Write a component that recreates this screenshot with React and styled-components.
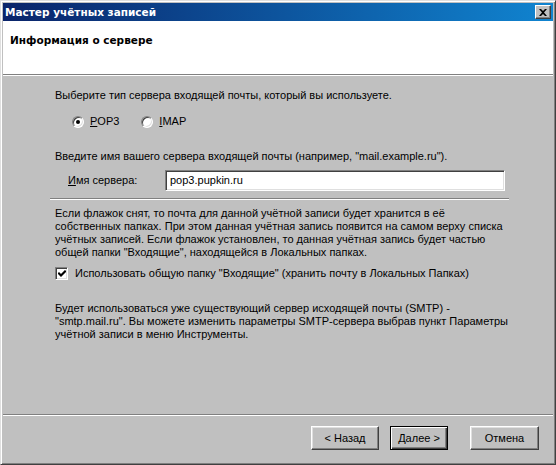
import React from "react";
import styled, { createGlobalStyle } from "styled-components";

const GlobalStyle = createGlobalStyle`
  html, body {
    margin: 0;
    padding: 0;
    background: #c0c0c0;
    overflow: hidden;
  }
`;

const Window = styled.div`
  width: 556px;
  height: 465px;
  box-sizing: border-box;
  background: #c0c0c0;
  border: 1px solid;
  border-color: #dfdfdf #404040 #404040 #dfdfdf;
  box-shadow: inset 1px 1px #ffffff, inset -1px -1px #808080;
  padding: 2px;
  display: flex;
  flex-direction: column;
  font-family: "Liberation Sans", Arial, sans-serif;
  font-size: 11px;
  color: #000;
`;

const TitleBar = styled.div`
  height: 18px;
  flex: none;
  display: flex;
  align-items: center;
  justify-content: space-between;
  padding: 0 2px 0 2px;
  background: linear-gradient(to right, #0a246a, #1084d0);
  color: #fff;
  font-family: "DejaVu Sans", Tahoma, sans-serif;
  font-weight: bold;
  font-size: 10.5px;
`;

const CloseButton = styled.div`
  width: 16px;
  height: 14px;
  box-sizing: border-box;
  background: #c0c0c0;
  border: 1px solid;
  border-color: #ffffff #404040 #404040 #ffffff;
  box-shadow: inset -1px -1px #808080;
  display: flex;
  align-items: center;
  justify-content: center;
`;

const Header = styled.div`
  flex: none;
  height: 54px;
  box-sizing: border-box;
  background: #fff;
  border-bottom: 1px solid #808080;
  box-shadow: 0 1px #ffffff;
  padding: 13px 0 0 7px;
  font-family: "DejaVu Sans", Tahoma, sans-serif;
  font-weight: bold;
  font-size: 10.5px;
  line-height: 13px;
`;

const Body = styled.div`
  flex: 1;
  padding: 14px 0 0 49px;
  line-height: 13px;
  white-space: nowrap;
`;

const Text = styled.div`
  margin-top: ${(p) => p.$gap || 0}px;
  margin-left: 3px;
`;

const RadioRow = styled.div`
  display: flex;
  align-items: center;
  height: 13px;
  margin-top: 13px;
  padding-left: 20px;
`;

const RadioLabel = styled.label`
  display: flex;
  align-items: center;
  gap: 6px;
  margin-right: 22px;
`;

const Radio = styled.span`
  position: relative;
  width: 12px;
  height: 12px;
  box-sizing: border-box;
  border-radius: 50%;
  background: #fff;
  border: 1px solid;
  border-color: #808080 #ffffff #ffffff #808080;
  box-shadow: inset 1px 1px #404040, inset -1px -1px #dfdfdf;
  &::after {
    content: "";
    display: ${(p) => (p.$checked ? "block" : "none")};
    position: absolute;
    left: 3px;
    top: 3px;
    width: 4px;
    height: 4px;
    border-radius: 50%;
    background: #000;
  }
`;

const FieldRow = styled.div`
  display: flex;
  align-items: center;
  margin-top: 7px;
  padding-left: 16px;
`;

const FieldLabel = styled.span`
  width: 97px;
`;

const Input = styled.div`
  width: 340px;
  height: 21px;
  box-sizing: border-box;
  background: #fff;
  border: 1px solid;
  border-color: #808080 #ffffff #ffffff #808080;
  box-shadow: inset 1px 1px #404040, inset -1px -1px #dfdfdf;
  padding: 3px 0 0 4px;
`;

const Separator = styled.div`
  height: 1px;
  background: #808080;
  box-shadow: 0 1px #ffffff;
  margin: ${(p) => p.$margin};
`;

const CheckRow = styled.label`
  display: flex;
  align-items: center;
  gap: 7px;
  margin-top: 8px;
  padding-left: 3px;
`;

const CheckBox = styled.span`
  width: 13px;
  height: 13px;
  box-sizing: border-box;
  background: #fff;
  border: 1px solid;
  border-color: #808080 #ffffff #ffffff #808080;
  box-shadow: inset 1px 1px #404040, inset -1px -1px #dfdfdf;
  display: flex;
  align-items: center;
  justify-content: center;
`;

const Footer = styled.div`
  flex: none;
  display: flex;
  flex-direction: column;
`;

const ButtonBar = styled.div`
  display: flex;
  justify-content: flex-end;
  padding: 11px 14px 12px 0;
`;

const Button = styled.div`
  width: ${(p) => p.$width}px;
  height: 24px;
  box-sizing: border-box;
  margin-left: ${(p) => p.$gap}px;
  background: #c0c0c0;
  display: flex;
  align-items: center;
  justify-content: center;
  border: 1px solid;
  border-color: ${(p) =>
    p.$default ? "#000" : "#ffffff #404040 #404040 #ffffff"};
  box-shadow: ${(p) =>
    p.$default
      ? "inset 1px 1px #ffffff, inset -1px -1px #404040, inset -2px -2px #808080"
      : "inset -1px -1px #808080, inset 1px 1px #dfdfdf"};
`;

const U = styled.span`
  text-decoration: underline;
`;

const CloseIcon = () => (
  <svg width="8" height="7" viewBox="0 0 8 7">
    <path d="M0 0h2l2 2 2-2h2L5 3.5 8 7H6L4 5 2 7H0l3-3.5z" fill="#000" />
  </svg>
);

const CheckIcon = () => (
  <svg width="8" height="8" viewBox="0 0 8 8">
    <path
      d="M1 3.5l2 2 4-4"
      fill="none"
      stroke="#000"
      strokeWidth="2.2"
      strokeLinecap="square"
    />
  </svg>
);

export default function App() {
  return (
    <>
      <GlobalStyle />
      <Window>
        <TitleBar>
          <span>Мастер учётных записей</span>
          <CloseButton>
            <CloseIcon />
          </CloseButton>
        </TitleBar>
        <Header>Информация о сервере</Header>
        <Body>
          <Text>
            Выберите тип сервера входящей почты, который вы используете.
          </Text>
          <RadioRow>
            <RadioLabel>
              <Radio $checked />
              <span>
                <U>P</U>OP3
              </span>
            </RadioLabel>
            <RadioLabel>
              <Radio />
              <span>
                <U>I</U>MAP
              </span>
            </RadioLabel>
          </RadioRow>
          <Text $gap={22}>
            Введите имя вашего сервера входящей почты (например,
            "mail.example.ru").
          </Text>
          <FieldRow>
            <FieldLabel>
              <U>И</U>мя сервера:
            </FieldLabel>
            <Input>pop3.pupkin.ru</Input>
          </FieldRow>
          <Separator $margin="7px 44px 0 -2px" />
          <Text $gap={8}>
            Если флажок снят, то почта для данной учётной записи будет хранится
            в её
            <br />
            собственных папках. При этом данная учётная запись появится на
            самом верху списка
            <br />
            учётных записей. Если флажок установлен, то данная учётная запись
            будет частью
            <br />
            общей папки "Входящие", находящейся в Локальных папках.
          </Text>
          <CheckRow>
            <CheckBox>
              <CheckIcon />
            </CheckBox>
            <span>
              Использовать общую папку "Входящие" (хранить почту в Локальных
              Папках)
            </span>
          </CheckRow>
          <Text $gap={22}>
            Будет использоваться уже существующий сервер исходящей почты (SMTP)
            -
            <br />
            "smtp.mail.ru". Вы можете изменить параметры SMTP-сервера выбрав
            пункт Параметры
            <br />
            учётной записи в меню Инструменты.
          </Text>
        </Body>
        <Footer>
          <Separator $margin="0" />
          <ButtonBar>
            <Button $width={68} $gap={0}>
              &lt; Назад
            </Button>
            <Button $width={58} $gap={11} $default>
              Далее &gt;
            </Button>
            <Button $width={69} $gap={22}>
              Отмена
            </Button>
          </ButtonBar>
        </Footer>
      </Window>
    </>
  );
}
